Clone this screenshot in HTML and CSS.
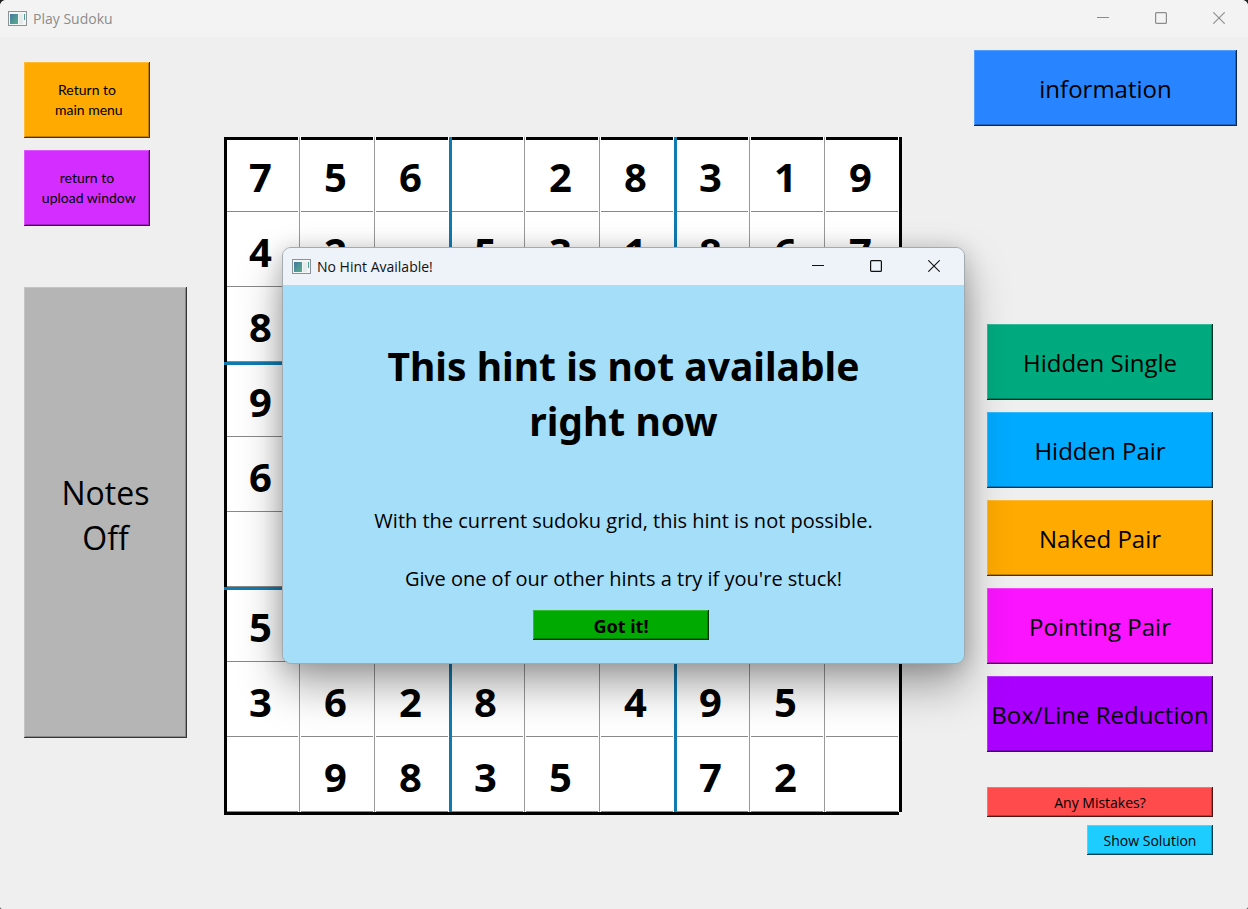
FILE: index.html
```html
<!DOCTYPE html>
<html lang="en">
<head>
<meta charset="utf-8">
<meta name="viewport" content="width=device-width, initial-scale=1">
<title>Play Sudoku</title>
<link rel="stylesheet" href="styles.css">
</head>
<body>
<svg width="0" height="0" class="defs" aria-hidden="true">
  <defs>
    <linearGradient id="pane" x1="0" y1="0" x2="1" y2="1">
      <stop offset="0" stop-color="#4577a0"/>
      <stop offset="1" stop-color="#56b08a"/>
    </linearGradient>
    <symbol id="app" viewBox="0 0 19 16">
      <rect x=".5" y=".5" width="18" height="14" fill="#f4f6f6" stroke="#8b9298"/>
      <rect x="2" y="3" width="8" height="10" fill="url(#pane)"/>
      <rect x="11" y="3" width="4" height="10" fill="#e4ebea"/>
      <rect x="16" y="3" width="1" height="6" fill="#4f9c92"/>
    </symbol>
    <symbol id="min" viewBox="0 0 12 12"><path d="M0 5.5H12" stroke="currentColor" fill="none"/></symbol>
    <symbol id="max" viewBox="0 0 12 12"><rect x=".6" y=".6" width="10.8" height="10.8" rx="1" stroke="currentColor" stroke-width="1.2" fill="none"/></symbol>
    <symbol id="close" viewBox="0 0 12 12"><path d="M.3 .3L11.7 11.7M11.7 .3L.3 11.7" stroke="currentColor" stroke-width="1.1" fill="none"/></symbol>
  </defs>
</svg>
<div class="window">
  <header class="titlebar titlebar-inactive">
    <svg class="app-icon" aria-hidden="true"><use href="#app"/></svg>
    <span class="title">Play Sudoku</span>
    <button class="caption" aria-label="Minimize"><svg><use href="#min"/></svg></button>
    <button class="caption" aria-label="Maximize"><svg><use href="#max"/></svg></button>
    <button class="caption" aria-label="Close"><svg><use href="#close"/></svg></button>
  </header>
  <main class="content">
    <nav class="left">
      <button class="bevel script orange">Return to<br>&nbsp;main menu</button>
      <button class="bevel script violet">return to<br>&nbsp;upload window</button>
      <button class="bevel notes">Notes<br>Off</button>
    </nav>
    <section class="board" id="board" aria-label="Sudoku grid"></section>
    <aside class="right">
      <button class="bevel large info">information</button>
      <div class="hints">
        <button class="bevel large green">Hidden Single</button>
        <button class="bevel large blue">Hidden Pair</button>
        <button class="bevel large orange">Naked Pair</button>
        <button class="bevel large magenta">Pointing Pair</button>
        <button class="bevel large purple">Box/Line Reduction</button>
      </div>
      <div class="checks">
        <button class="bevel small red">Any Mistakes?</button>
        <button class="bevel small cyan">Show Solution</button>
      </div>
    </aside>
  </main>
  <div class="dialog" role="dialog" aria-labelledby="dialog-title">
    <header class="titlebar titlebar-active">
      <svg class="app-icon" aria-hidden="true"><use href="#app"/></svg>
      <span class="title" id="dialog-title">No Hint Available!</span>
      <button class="caption" aria-label="Minimize"><svg><use href="#min"/></svg></button>
      <button class="caption" aria-label="Maximize"><svg><use href="#max"/></svg></button>
      <button class="caption" aria-label="Close"><svg><use href="#close"/></svg></button>
    </header>
    <div class="message">
      <h1>This hint is not available<br>right now</h1>
      <p>With the current sudoku grid, this hint is not possible.</p>
      <p>Give one of our other hints a try if you're stuck!</p>
      <button class="bevel confirm">Got it!</button>
    </div>
  </div>
</div>
<script src="board.js"></script>
</body>
</html>
```
FILE: board.js
```js
const rows = [
  "756.28319",
  "42.531867",
  "8........",
  "9........",
  "6........",
  ".........",
  "5........",
  "3628.495.",
  ".9835.72."
];
const board = document.getElementById("board");
rows.forEach((row, r) => {
  [...row].forEach((digit, c) => {
    const cell = document.createElement("button");
    const classes = ["cell"];
    if (r === 0) classes.push("row-first");
    else if (r % 3 === 0) classes.push("row-box");
    if (c === 0) classes.push("col-first");
    else if (c % 3 === 0) classes.push("col-box");
    cell.className = classes.join(" ");
    cell.textContent = digit === "." ? "" : digit;
    cell.setAttribute("aria-label", `Row ${r + 1}, column ${c + 1}`);
    board.append(cell);
  });
});
```
FILE: styles.css
```css
* { box-sizing: border-box; }

body {
  margin: 0;
  background: #202020;
  color: #000;
  font-family: "Noto Sans", "Open Sans", sans-serif;
}

button {
  margin: 0;
  padding: 0;
  border: 0;
  color: #000;
  font-family: inherit;
}

.defs { position: absolute; }

.window {
  position: relative;
  min-height: 100vh;
  border-radius: 6px 6px 2px 2px;
  background: #efefef;
  overflow: hidden;
}

.titlebar {
  display: flex;
  align-items: center;
  height: 37px;
  padding-left: 8px;
  font-family: "Open Sans", "Noto Sans", sans-serif;
  font-size: 14px;
}
.titlebar-inactive { background: #f3f3f3; color: #8c8c8c; }
.titlebar-active { background: #eef3f9; color: #111; }
.app-icon { width: 19px; height: 16px; margin-right: 6px; }
.title { flex: 1; }
.caption {
  display: flex;
  align-items: center;
  justify-content: center;
  width: 58px;
  height: 36px;
  align-self: flex-start;
  background: transparent;
  color: inherit;
}
.caption svg { width: 12px; height: 12px; }

.content {
  display: grid;
  grid-template-columns: 163px 675px 1fr;
  column-gap: 37px;
  align-items: start;
  padding: 13px 11px 0 24px;
}

.bevel {
  --face: #ccc;
  background: var(--face);
  box-shadow:
    inset -1px -1px color-mix(in srgb, var(--face) 30%, #000),
    inset 1px 1px color-mix(in srgb, var(--face) 80%, #fff),
    inset -2px -2px color-mix(in srgb, var(--face) 75%, #000);
}
.orange { --face: #ffaa00; }
.violet { --face: #d42dff; }
.green { --face: #00aa7f; }
.blue { --face: #00aaff; }
.magenta { --face: #fa14ff; }
.purple { --face: #aa00ff; }
.red { --face: #ff4b4b; }
.cyan { --face: #1ecdff; }

.left {
  display: flex;
  flex-direction: column;
  align-items: flex-start;
  gap: 12px;
  padding-top: 12px;
}
.script {
  width: 126px;
  height: 76px;
  font-family: Lato, sans-serif;
  font-size: 14px;
  line-height: 20px;
}
.notes {
  --face: #b5b5b5;
  width: 163px;
  height: 451px;
  margin-top: 49px;
  padding-top: 4px;
  font-family: "Open Sans", "Noto Sans", sans-serif;
  font-size: 32px;
  line-height: 45px;
}

.board {
  display: grid;
  grid-template-columns: repeat(9, 75px);
  grid-auto-rows: 75px;
  margin-top: 87px;
  box-shadow: 3px 0 #000, 0 3px #000;
}
.cell {
  padding: 5px 2px 0 0;
  background: #fff;
  font-size: 40px;
  font-weight: 700;
  line-height: 70px;
  box-shadow: inset 1px 0 #999, inset 2px 0 #fff, inset -1px 0 #fff, inset 0 -1px #888;
}
.row-first { box-shadow: inset 1px 0 #999, inset 2px 0 #fff, inset -1px 0 #fff, inset 0 3px #000, inset 0 -1px #888; }
.row-box { box-shadow: inset 0 3px #117bb0, inset 1px 0 #999, inset 2px 0 #fff, inset -1px 0 #fff, inset 0 -1px #888; }
.col-first { box-shadow: inset 3px 0 #000, inset -1px 0 #fff, inset 0 -1px #888; }
.col-box { box-shadow: inset 3px 0 #117bb0, inset -1px 0 #fff, inset 0 -1px #888; }
.row-first.col-first { box-shadow: inset 3px 0 #000, inset -1px 0 #fff, inset 0 3px #000, inset 0 -1px #888; }
.row-first.col-box { box-shadow: inset 3px 0 #117bb0, inset -1px 0 #fff, inset 0 3px #000, inset 0 -1px #888; }
.row-box.col-first { box-shadow: inset 0 3px #117bb0, inset 3px 0 #000, inset -1px 0 #fff, inset 0 -1px #888; }
.row-box.col-box { box-shadow: inset 0 3px #117bb0, inset 3px 0 #117bb0, inset -1px 0 #fff, inset 0 -1px #888; }

.right {
  display: flex;
  flex-direction: column;
  align-items: flex-end;
}
.large {
  height: 76px;
  font-family: "Open Sans", "Noto Sans", sans-serif;
  font-size: 24px;
  line-height: 34px;
  padding-top: 1px;
  white-space: nowrap;
}
.info { --face: #2885ff; width: 263px; }
.hints,
.checks {
  display: flex;
  flex-direction: column;
  width: 226px;
  margin-right: 24px;
}
.hints { gap: 12px; margin-top: 198px; }
.checks { gap: 8px; margin-top: 35px; }
.small {
  height: 30px;
  padding-top: 2px;
  font-family: "Open Sans", "Noto Sans", sans-serif;
  font-size: 14px;
  line-height: 20px;
}
.cyan { align-self: flex-end; width: 126px; }

.dialog {
  position: absolute;
  top: 247px;
  left: 282px;
  width: 683px;
  border: 1px solid #a3abb0;
  border-radius: 9px;
  background: #a4def9;
  background-clip: padding-box;
  box-shadow: 0 22px 44px rgba(0, 0, 0, .34), 0 2px 22px rgba(0, 0, 0, .18);
}
.dialog .titlebar { border-radius: 8px 8px 0 0; padding: 0 1px 0 9px; }
.message {
  display: flex;
  flex-direction: column;
  align-items: center;
  padding: 53px 20px 23px;
  text-align: center;
}
.message h1 {
  margin: 0 0 59px;
  font-size: 39px;
  font-weight: 700;
  line-height: 55px;
}
.message p {
  margin: 0 0 30px;
  font-family: "Open Sans", "Noto Sans", sans-serif;
  font-size: 20px;
  line-height: 28px;
}
.message p + p { margin-bottom: 17px; }
.confirm {
  --face: #00aa00;
  width: 176px;
  height: 30px;
  margin-right: 5px;
  padding-top: 2px;
  font-size: 18px;
  font-weight: 700;
  line-height: 24px;
}
```
